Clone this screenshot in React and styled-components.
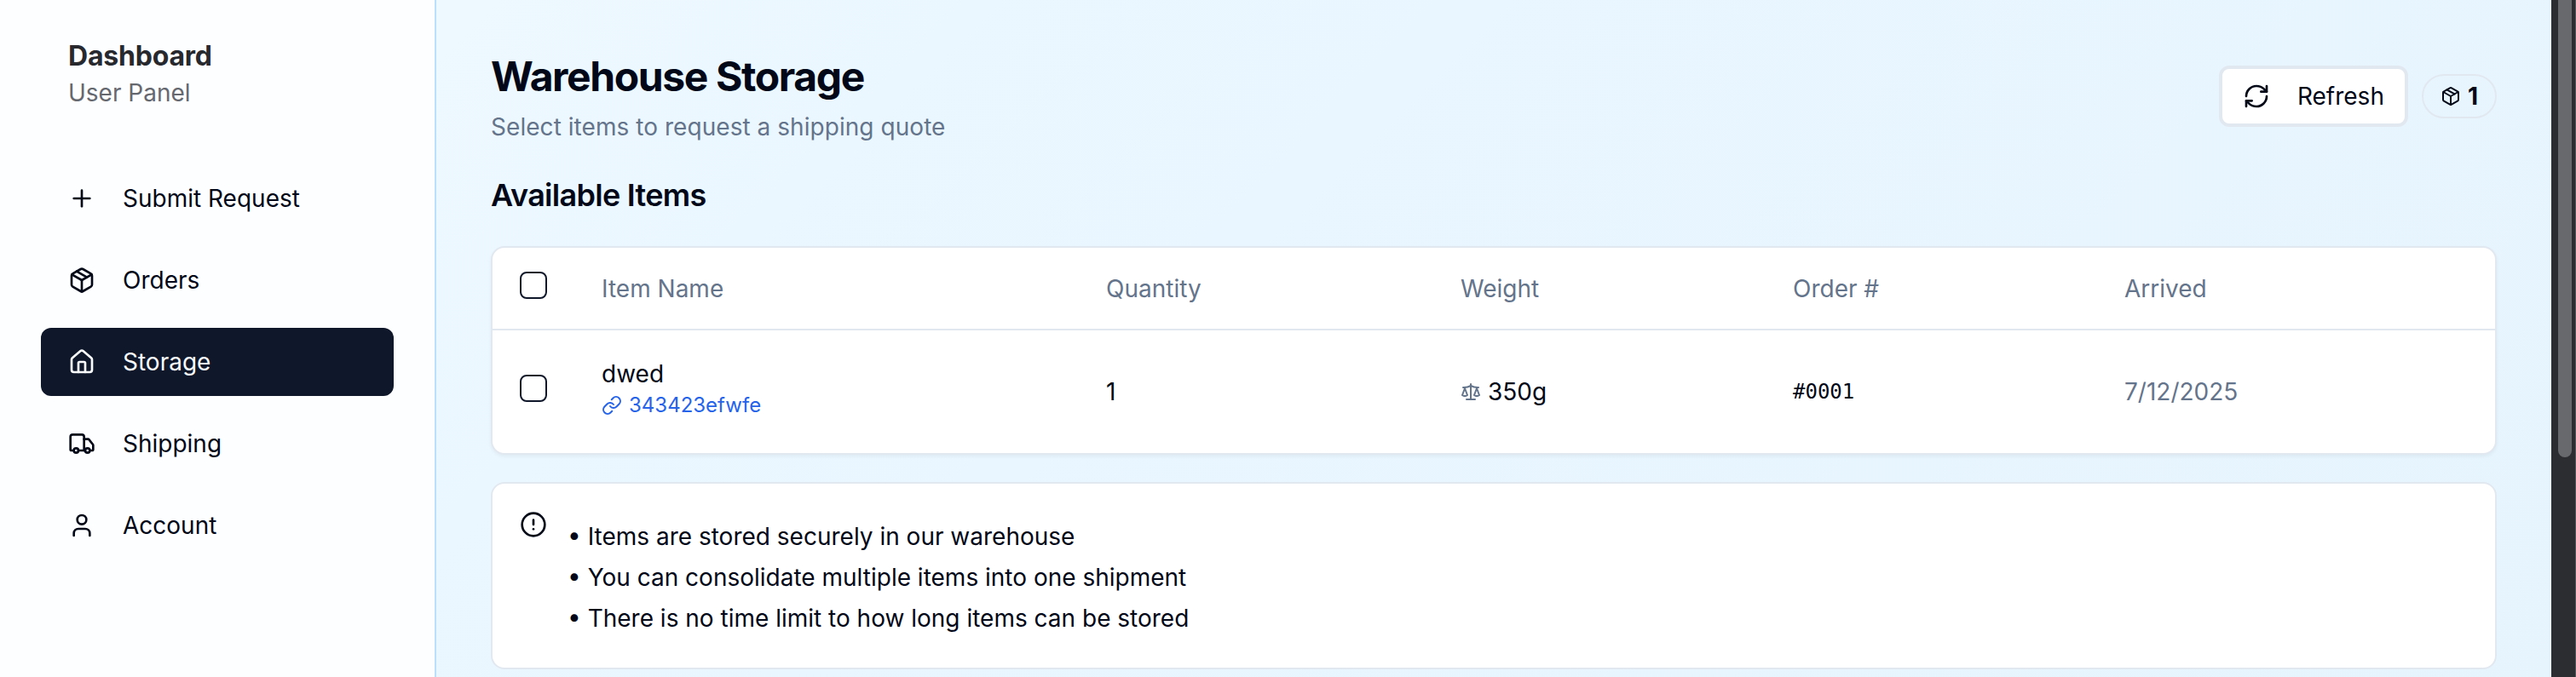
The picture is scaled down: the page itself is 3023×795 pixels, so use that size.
import styled, { createGlobalStyle } from "styled-components";
import {
  Plus,
  Package,
  House,
  Truck,
  User,
  RefreshCw,
  Link,
  Scale,
  CircleAlert,
} from "lucide-react";

const GlobalStyle = createGlobalStyle`
  * {
    box-sizing: border-box;
    margin: 0;
    padding: 0;
  }
  body {
    font-family: Inter, "Liberation Sans", sans-serif;
    font-size: 28px;
    line-height: 40px;
    color: #020817;
    overflow: hidden;
  }
`;

const Page = styled.div`
  display: flex;
  width: 100%;
  height: 795px;
  overflow: hidden;
  background: linear-gradient(135deg, #eff9ff 0%, #e9f6ff 45%, #e6f4fe 100%);
`;

const Sidebar = styled.aside`
  width: 512px;
  flex-shrink: 0;
  padding: 42px 48px 0;
  background: #fdfeff;
  border-right: 2px solid #bae0fd;
`;

const Brand = styled.div`
  padding: 0 32px;
  margin-bottom: 64px;
`;

const BrandTitle = styled.h2`
  font-size: 32px;
  line-height: 48px;
  font-weight: 700;
  letter-spacing: -0.2px;
  color: #27292e;
`;

const BrandSub = styled.p`
  line-height: 39px;
  color: #65686e;
`;

const Nav = styled.nav`
  display: flex;
  flex-direction: column;
  gap: 16px;
`;

const NavItem = styled.a`
  display: flex;
  align-items: center;
  gap: 32px;
  height: 80px;
  padding: 0 32px;
  border-radius: 12px;
  color: ${(props) => (props.$active ? "#f8fafc" : "#020817")};
  background: ${(props) => (props.$active ? "#0f172a" : "transparent")};
`;

const Main = styled.main`
  flex: 1;
  padding: 64px 64px 0;
`;

const Header = styled.header`
  display: flex;
  justify-content: space-between;
  align-items: flex-start;
  height: 98px;
`;

const Title = styled.h1`
  font-size: 48px;
  line-height: 52px;
  font-weight: 700;
  letter-spacing: -0.029em;
`;

const Subtitle = styled.p`
  margin-top: 13px;
  letter-spacing: 0.05px;
  color: #64748b;
`;

const Actions = styled.div`
  display: flex;
  align-items: center;
  gap: 16px;
  height: 98px;
`;

const Button = styled.button`
  display: flex;
  align-items: center;
  gap: 32px;
  width: 222px;
  height: 72px;
  padding: 0 24px;
  font: inherit;
  color: inherit;
  background: #fff;
  border: 4px solid #e2e8f0;
  border-radius: 12px;

  svg {
    flex-shrink: 0;
  }
`;

const Badge = styled.div`
  display: flex;
  align-items: center;
  gap: 8px;
  height: 52px;
  padding: 0 20px;
  font-weight: 700;
  border: 2px solid #e2e8f0;
  border-radius: 26px;
`;

const SectionTitle = styled.h3`
  margin: 39px 0 32px;
  font-size: 36px;
  line-height: 56px;
  font-weight: 600;
  letter-spacing: -0.02em;
`;

const Card = styled.section`
  background: #fff;
  border: 2px solid #e2e8f0;
  border-radius: 16px;
`;

const TableCard = styled(Card)`
  height: 245px;
  box-shadow: 0 2px 4px rgba(0, 0, 0, 0.05);
`;

const Row = styled.div`
  display: grid;
  grid-template-columns: 96px 592px 416px 390px 389px 1fr;
  align-items: center;
  height: ${(props) => (props.$head ? "97px" : "144px")};
  color: ${(props) => (props.$head ? "#64748b" : "inherit")};
  border-bottom: ${(props) => (props.$head ? "2px solid #e2e8f0" : "none")};
`;

const Cell = styled.div`
  display: flex;
  align-items: center;
  gap: 8px;
  padding: 0 32px;
  color: ${(props) => (props.$muted ? "#64748b" : "inherit")};

  svg {
    color: #64748b;
  }
`;

const NameCell = styled.div`
  padding: 0 32px 8px;
`;

const ItemLink = styled.a`
  display: flex;
  align-items: center;
  gap: 8px;
  font-size: 24px;
  line-height: 34px;
  color: #2563eb;
`;

const Mono = styled.span`
  font-family: "DejaVu Sans Mono", monospace;
  font-size: 24px;
`;

const Checkbox = styled.button`
  width: 32px;
  height: 32px;
  margin-bottom: 8px;
  background: transparent;
  border: 2px solid #0f172a;
  border-radius: 8px;
`;

const Notice = styled(Card)`
  display: flex;
  gap: 24px;
  height: 220px;
  margin-top: 32px;
  padding: 32px;
`;

const NoticeList = styled.ul`
  display: flex;
  flex-direction: column;
  gap: 8px;
  padding-top: 10px;
  list-style: none;
`;

const ScrollTrack = styled.div`
  width: 29px;
  flex-shrink: 0;
  padding-left: 8px;
  background: #2c2d30;
  border-right: 1px solid #57585b;
`;

const ScrollThumb = styled.div`
  width: 16px;
  height: 537px;
  background: #68696c;
  border-radius: 0 0 8px 8px;
`;

const navItems = [
  { label: "Submit Request", icon: Plus },
  { label: "Orders", icon: Package },
  { label: "Storage", icon: House, active: true },
  { label: "Shipping", icon: Truck },
  { label: "Account", icon: User },
];

const notes = [
  "Items are stored securely in our warehouse",
  "You can consolidate multiple items into one shipment",
  "There is no time limit to how long items can be stored",
];

const App = () => {
  return (
    <>
      <GlobalStyle />
      <Page>
        <Sidebar>
          <Brand>
            <BrandTitle>Dashboard</BrandTitle>
            <BrandSub>User Panel</BrandSub>
          </Brand>
          <Nav>
            {navItems.map(({ label, icon: Icon, active }) => (
              <NavItem key={label} $active={active}>
                <Icon size={32} />
                {label}
              </NavItem>
            ))}
          </Nav>
        </Sidebar>

        <Main>
          <Header>
            <div>
              <Title>Warehouse Storage</Title>
              <Subtitle>Select items to request a shipping quote</Subtitle>
            </div>
            <Actions>
              <Button>
                <RefreshCw size={32} />
                Refresh
              </Button>
              <Badge>
                <Package size={24} />1
              </Badge>
            </Actions>
          </Header>

          <SectionTitle>Available Items</SectionTitle>

          <TableCard>
            <Row $head>
              <Cell>
                <Checkbox />
              </Cell>
              <Cell>Item Name</Cell>
              <Cell>Quantity</Cell>
              <Cell>Weight</Cell>
              <Cell>Order #</Cell>
              <Cell>Arrived</Cell>
            </Row>
            <Row>
              <Cell>
                <Checkbox />
              </Cell>
              <NameCell>
                <div>dwed</div>
                <ItemLink>
                  <Link size={24} />
                  343423efwfe
                </ItemLink>
              </NameCell>
              <Cell>1</Cell>
              <Cell>
                <Scale size={24} />
                350g
              </Cell>
              <Cell>
                <Mono>#0001</Mono>
              </Cell>
              <Cell $muted>7/12/2025</Cell>
            </Row>
          </TableCard>

          <Notice>
            <CircleAlert size={32} />
            <NoticeList>
              {notes.map((note) => (
                <li key={note}>• {note}</li>
              ))}
            </NoticeList>
          </Notice>
        </Main>

        <ScrollTrack>
          <ScrollThumb />
        </ScrollTrack>
      </Page>
    </>
  );
};

export default App;
